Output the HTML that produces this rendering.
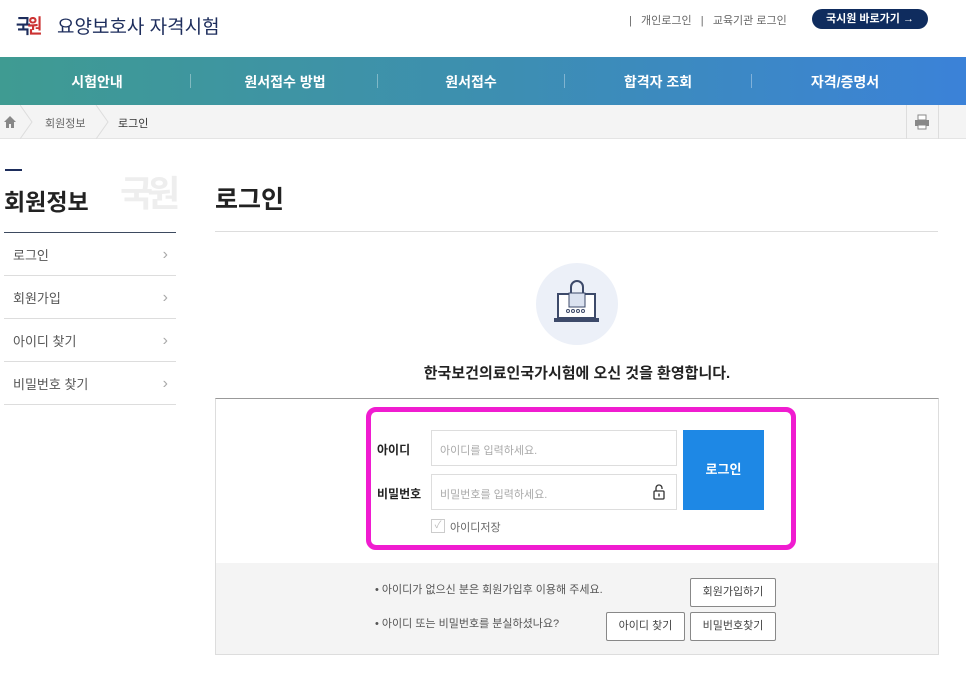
<!DOCTYPE html>
<html><head><meta charset="utf-8"><style>
*{margin:0;padding:0;box-sizing:border-box}
body{width:966px;height:681px;background:#fff;font-family:"Liberation Sans","Noto Sans CJK KR",sans-serif;position:relative;overflow:hidden;color:#222}
.a{position:absolute}
.nav{top:57px;left:0;width:966px;height:48px;background:linear-gradient(90deg,#3f9b92,#3d8fb0 50%,#3b82d8);}
.nav span{position:absolute;top:15px;color:#fff;font-size:14px;font-weight:bold;transform:translateX(-50%)}
.nav i{position:absolute;top:17px;width:1px;height:14px;background:rgba(255,255,255,.35)}
.bc{top:105px;left:0;width:966px;height:34px;background:#f4f4f4;border-bottom:1px solid #e4e4e4}
.side div{position:absolute;left:4px;width:172px;height:43px;border-bottom:1px solid #ddd;font-size:13px;color:#555;padding:12px 0 0 9px}
.side div:after{content:"›";position:absolute;right:8px;top:14px;color:#aaa;font-size:16px;line-height:16px}
.inp{position:absolute;left:431px;width:246px;height:36px;border:1px solid #ddd;font-size:11px;color:#aaa;padding:11px 8px}
.btn{position:absolute;height:29px;border:1px solid #888;border-radius:2px;background:#fff;font-size:11px;color:#444;text-align:center;line-height:27px}
</style></head><body>
<div class="a" style="left:16px;top:10px;font-size:20px;font-weight:bold;color:#1d2d5c;letter-spacing:-4px;transform:scaleX(.8);transform-origin:left">국<span style="color:#c33">원</span></div>
<div class="a" style="left:57px;top:12px;font-size:19px;color:#1d2d5c">요양보호사 자격시험</div>
<div class="a" style="left:629px;top:12px;font-size:11px;color:#666">|&nbsp;&nbsp;&nbsp;개인로그인&nbsp;&nbsp;&nbsp;|&nbsp;&nbsp;&nbsp;교육기관 로그인</div>
<div class="a" style="left:812px;top:9px;width:116px;height:20px;border-radius:10px;background:#0f2c5e;color:#fff;font-size:11px;font-weight:bold;text-align:center;line-height:20px">국시원 바로가기 →</div>
<div class="a nav"><span style="left:97px">시험안내</span><i style="left:190px"></i><span style="left:285px">원서접수 방법</span><i style="left:377px"></i><span style="left:471px">원서접수</span><i style="left:564px"></i><span style="left:658px">합격자 조회</span><i style="left:751px"></i><span style="left:845px">자격/증명서</span></div>
<div class="a bc">
<svg class="a" style="left:4px;top:11px" width="12" height="12"><path d="M6 0L0 6h2v6h3V8h2v4h3V6h2z" fill="#888"/></svg>
<svg class="a" style="left:20px;top:0" width="130" height="34"><path d="M0 0L12 17L0 34M76 0L88 17L76 34" stroke="#ddd" fill="none"/></svg>
<div class="a" style="left:45px;top:10px;font-size:11px;color:#666">회원정보</div>
<div class="a" style="left:118px;top:10px;font-size:11px;color:#333">로그인</div>
<div class="a" style="left:906px;top:0;width:33px;height:34px;border-left:1px solid #ddd;border-right:1px solid #ddd"></div>
<svg class="a" style="left:914px;top:9px" width="16" height="16"><rect x="4" y="1" width="8" height="5" fill="#fff" stroke="#888"/><rect x="1" y="6" width="14" height="6" fill="#888"/><rect x="4" y="11" width="8" height="4" fill="#fff" stroke="#888"/></svg>
</div>
<div class="a" style="left:5px;top:169px;width:17px;height:2px;background:#1d2d5c"></div>
<div class="a" style="left:4px;top:183px;font-size:23px;font-weight:bold;color:#222">회원정보</div>
<div class="a" style="left:120px;top:165px;font-size:36px;font-weight:bold;color:#eee;letter-spacing:-6px">국원</div>
<div class="a" style="left:4px;top:232px;width:172px;height:1px;background:#3d4a60"></div>
<div class="side"><div style="top:233px">로그인</div><div style="top:276px">회원가입</div><div style="top:319px">아이디 찾기</div><div style="top:362px">비밀번호 찾기</div></div>
<div class="a" style="left:215px;top:180px;font-size:25px;font-weight:bold;color:#222">로그인</div>
<div class="a" style="left:215px;top:231px;width:723px;height:1px;background:#ddd"></div>
<div class="a" style="left:536px;top:263px;width:82px;height:82px;border-radius:50%;background:#ecf0f8"></div>
<svg class="a" style="left:554px;top:280px" width="48" height="48"><rect x="4" y="14" width="37" height="24" fill="#fff" stroke="#3d4a6a" stroke-width="2"/><rect x="0" y="38" width="45" height="4" fill="#3d4a6a"/><path d="M17 13V7a6 6 0 0 1 12 0v6" stroke="#3d4a6a" stroke-width="2" fill="none"/><rect x="15" y="13" width="16" height="14" fill="#dbe2f0" stroke="#3d4a6a"/><g fill="none" stroke="#3d4a6a"><circle cx="14" cy="31" r="1.5"/><circle cx="19" cy="31" r="1.5"/><circle cx="24" cy="31" r="1.5"/><circle cx="29" cy="31" r="1.5"/></g></svg>
<div class="a" style="left:0;width:1154px;top:362px;text-align:center;font-size:15px;font-weight:bold;color:#222">한국보건의료인국가시험에 오신 것을 환영합니다.</div>
<div class="a" style="left:215px;top:398px;width:724px;height:257px;border:1px solid #ddd;border-top:1px solid #999"></div>
<div class="a" style="left:216px;top:563px;width:722px;height:91px;background:#f4f4f4"></div>
<div class="a" style="left:366px;top:407px;width:430px;height:143px;border:5px solid #f01cd0;border-radius:10px"></div>
<div class="a" style="left:377px;top:441px;font-size:12px;font-weight:bold">아이디</div>
<div class="a" style="left:377px;top:485px;font-size:12px;font-weight:bold">비밀번호</div>
<div class="inp" style="top:430px">아이디를 입력하세요.</div>
<div class="inp" style="top:474px">비밀번호를 입력하세요.
<svg style="position:absolute;right:11px;top:9px" width="12" height="16"><path d="M3 7V4a3 3 0 0 1 6 0v1" stroke="#333" stroke-width="1.3" fill="none"/><rect x="1" y="7" width="10" height="8" rx="1" fill="#fff" stroke="#333" stroke-width="1.3"/><rect x="5.3" y="9.5" width="1.4" height="3" fill="#333"/></svg></div>
<div class="a" style="left:683px;top:430px;width:81px;height:80px;background:#1e88e5;color:#fff;font-size:13px;font-weight:bold;text-align:center;line-height:80px">로그인</div>
<div class="a" style="left:431px;top:519px;width:14px;height:14px;border:1px solid #ccc;color:#bbb;font-size:10px;text-align:center;line-height:12px">✓</div>
<div class="a" style="left:450px;top:519px;font-size:11px;color:#666">아이디저장</div>
<div class="a" style="left:375px;top:581px;font-size:11px;color:#555">• 아이디가 없으신 분은 회원가입후 이용해 주세요.</div>
<div class="a" style="left:375px;top:615px;font-size:11px;color:#555">• 아이디 또는 비밀번호를 분실하셨나요?</div>
<div class="btn" style="left:690px;top:578px;width:86px">회원가입하기</div>
<div class="btn" style="left:606px;top:612px;width:79px">아이디 찾기</div>
<div class="btn" style="left:690px;top:612px;width:86px">비밀번호찾기</div>
</body></html>
